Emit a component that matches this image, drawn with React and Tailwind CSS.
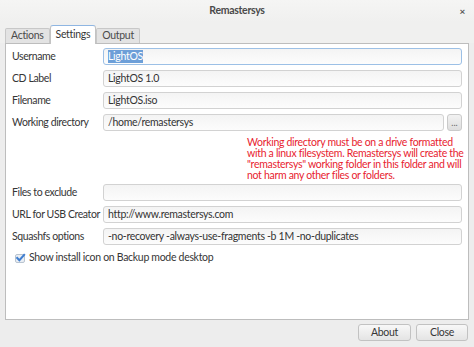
import { useState } from 'react'

const FONT = "font-['Lato','DejaVu_Sans',sans-serif] tracking-[-0.3px]"

function Field({ value, focused, selected }) {
  return (
    <div
      className={`flex h-[17px] min-w-0 flex-1 items-center overflow-hidden rounded-[3px] border bg-gradient-to-b from-[#f4f4f4] to-[#fcfcfc] px-[4px] text-[10.5px] text-[#333] ${
        focused ? 'border-[#9cc0e6]' : 'border-[#d2d2d2]'
      }`}
    >
      {selected ? (
        <span className="bg-[#6d9fd8] leading-[13px] text-white">{value}</span>
      ) : (
        <span className="whitespace-nowrap">{value}</span>
      )}
    </div>
  )
}

function Row({ label, children }) {
  return (
    <div className="flex h-[17px] items-center">
      <div className="w-[97px] shrink-0 whitespace-nowrap pl-[6px] text-[10.5px] tracking-[-0.4px] text-[#363636]">{label}</div>
      {children}
    </div>
  )
}

function CheckIcon() {
  return (
    <svg width="11" height="10" viewBox="0 0 11 10">
      <rect x="0.5" y="1.5" width="9" height="8" rx="1.5" fill="#e9eef4" stroke="#b9c4d0" />
      <path d="M1.5 4.2 L4.4 7.2 L9.8 1.2" fill="none" stroke="#3f7ed0" strokeWidth="2" />
    </svg>
  )
}

function App() {
  const [tab] = useState('Settings')
  const tabs = ['Actions', 'Settings', 'Output']

  return (
    <div className={`${FONT} flex h-[347px] w-[474px] flex-col overflow-hidden bg-[#ededed] text-[#363636]`}>
      <div className="relative flex h-[22px] shrink-0 items-center justify-center bg-gradient-to-b from-[#f5f5f4] to-[#f0f0ef]">
        <span className="text-[10.5px] font-bold text-[#4a4a4a]">Remastersys</span>
        <span className="absolute right-[9px] top-[6px] text-[10px] font-bold leading-[10px] text-[#555]">×</span>
      </div>

      <div className="flex h-[21px] items-end bg-[#f0f0ef] px-[5px]">
        {tabs.map((name) => {
          const active = name === tab
          return (
            <div
              key={name}
              className={
                active
                  ? 'relative z-10 -mb-px flex h-[19px] items-center rounded-t-[3px] border border-b-0 border-[#c3c3c3] border-t-[#8fb6e2] bg-white px-[5px] text-[10.5px] text-[#363636]'
                  : 'flex h-[15px] items-center rounded-t-[2px] border border-b-0 border-[#c8c8c8] bg-[#e3e3e3] px-[5px] text-[10.5px] text-[#4a4a4a]'
              }
            >
              {name}
            </div>
          )
        })}
      </div>

      <div className="mx-[5px] flex h-[277px] flex-col border border-[#bdbdbd] bg-white pr-[6px] pt-[4px]">
        <div className="flex flex-col gap-[5px]">
          <Row label="Username">
            <Field value="LightOS" focused selected />
          </Row>
          <Row label="CD Label">
            <Field value="LightOS 1.0" />
          </Row>
          <Row label="Filename">
            <Field value="LightOS.iso" />
          </Row>
          <Row label="Working directory">
            <Field value="/home/remastersys" />
            <div className="ml-[3px] flex h-[17px] w-[15px] items-end justify-center rounded-[3px] border border-[#cacaca] bg-gradient-to-b from-[#f2f2f2] to-[#dedede] pb-[3px] text-[9px] leading-[9px] tracking-normal text-[#666]">
              ...
            </div>
          </Row>
        </div>

        <div className="ml-[241px] mt-[6px] whitespace-nowrap text-[10.5px] leading-[11px] text-[#e8232f]">
          Working directory must be on a drive formatted
          <br />
          with a linux filesystem. Remastersys will create the
          <br />
          "remastersys" working folder in this folder and will
          <br />
          not harm any other files or folders.
        </div>

        <div className="mt-[3px] flex flex-col gap-[5px]">
          <Row label="Files to exclude">
            <Field value="" />
          </Row>
          <Row label="URL for USB Creator">
            <Field value="http://www.remastersys.com" />
          </Row>
          <Row label="Squashfs options">
            <Field value="-no-recovery -always-use-fragments -b 1M -no-duplicates" />
          </Row>
        </div>

        <div className="ml-[9px] mt-[5px] flex items-center gap-[3px] text-[10.5px] text-[#363636]">
          <CheckIcon />
          <span>Show install icon on Backup mode desktop</span>
        </div>
      </div>

      <div className="flex justify-end gap-[5px] pr-[6px] pt-[4px]">
        <button className="flex h-[17px] w-[53px] items-center justify-center rounded-[3px] border border-[#c2c2c2] bg-gradient-to-b from-[#f8f8f8] to-[#e4e4e4] text-[10.5px] text-[#363636]">
          About
        </button>
        <button className="flex h-[17px] w-[52px] items-center justify-center rounded-[3px] border border-[#c2c2c2] bg-gradient-to-b from-[#f8f8f8] to-[#e4e4e4] text-[10.5px] text-[#363636]">
          Close
        </button>
      </div>
    </div>
  )
}

export default App
